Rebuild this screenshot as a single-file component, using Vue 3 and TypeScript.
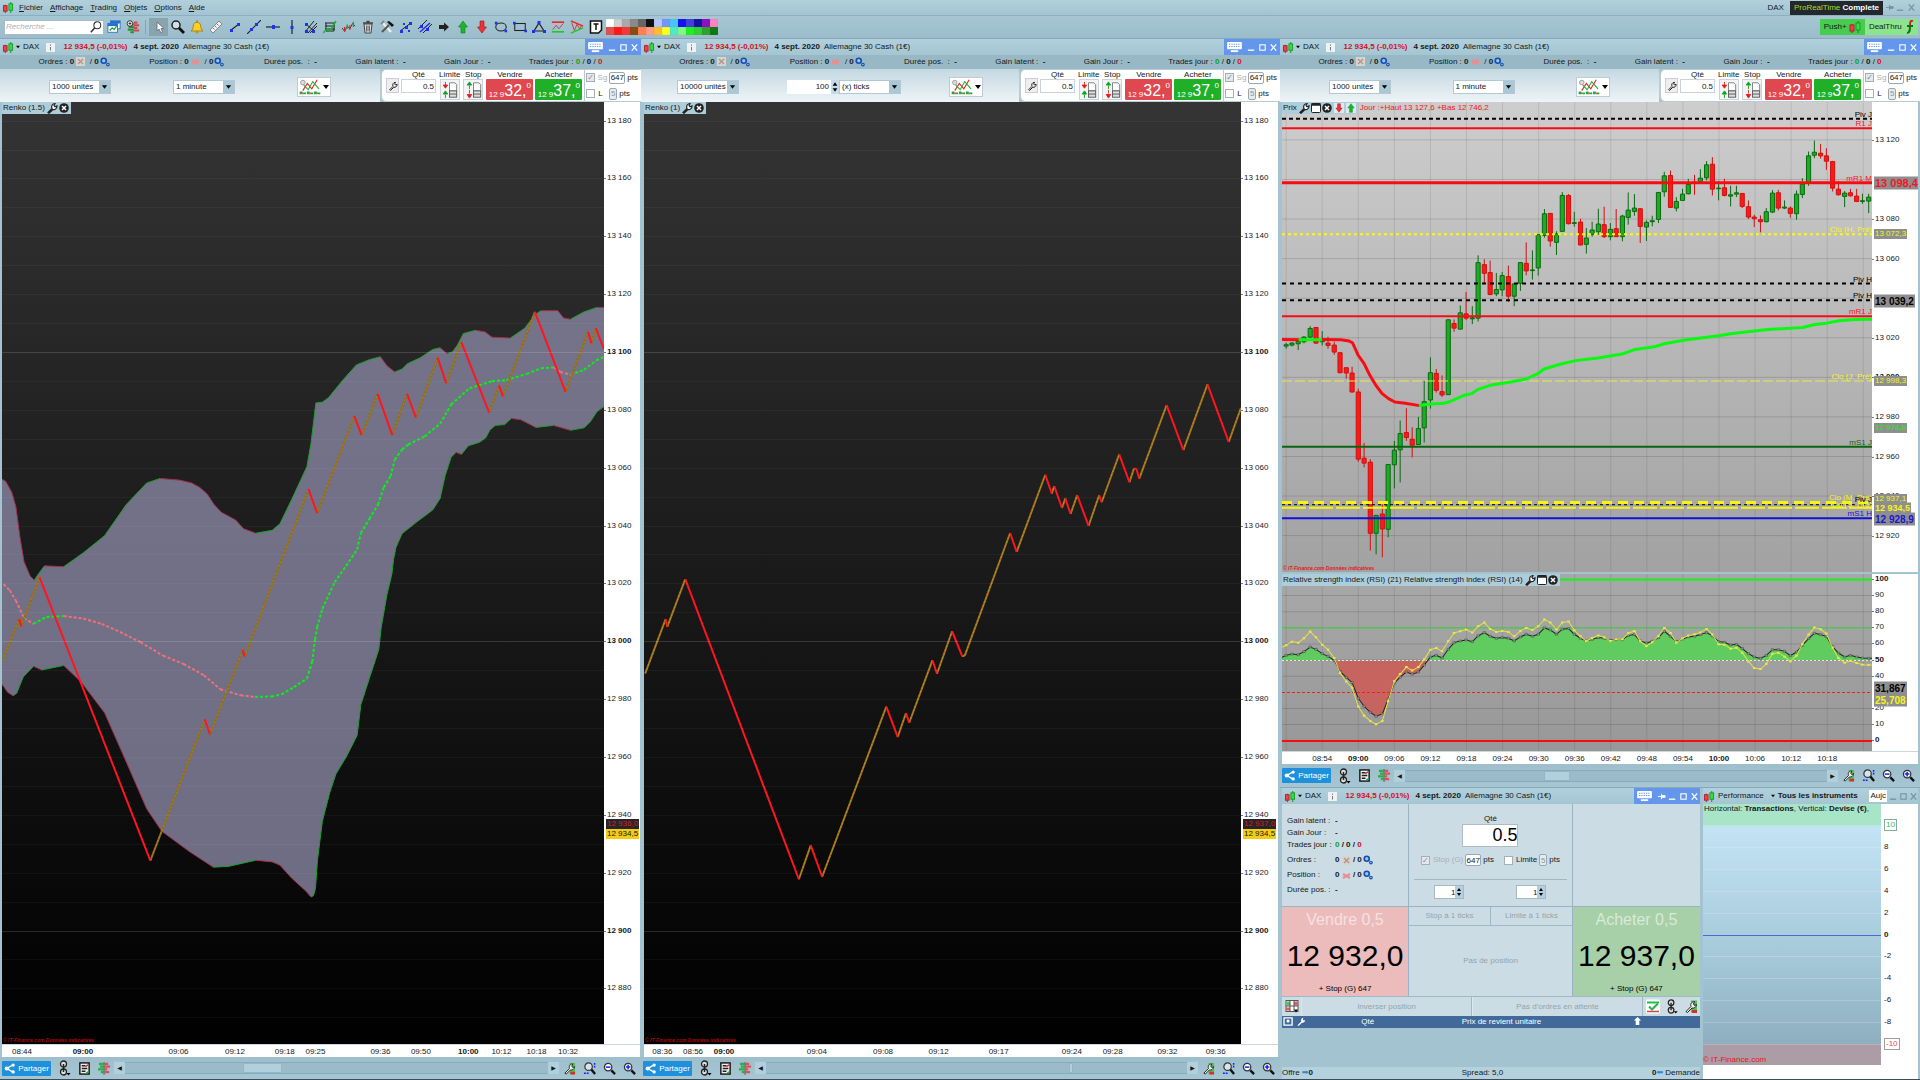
<script setup lang="ts">
type Point = [number, number]
interface Tick { at: number; text: string; bold?: boolean }
interface ChartWin {
  id: string
  units: string
  ticks: boolean
  head: string
  thumbAt: number
  thumbWidth: number
  times: Tick[]
}

const menus = ['Fichier', 'Affichage', 'Trading', 'Objets', 'Options', 'Aide']
const tools = ['cursor', 'zoom', 'bell', 'ruler', 'segment', 'line', 'hline', 'vline', 'fork', 'fibo', 'zigzag', 'trash', 'hammer', 'regress', 'parallel', 'right', 'up', 'down', 'ellipse', 'rect', 'triangle', 'range', 'wedge', 'text']
const palette = [
  '#fff', '#cfcfcf', '#aaa', '#8a8a8a', '#666', '#111', '#b4c8ff', '#6c98ff', '#48c4ff', '#1212f4', '#4040dc', '#1212a4', '#8a10c0', '#ff80c4',
  '#e05050', '#ff1818', '#f43838', '#8a4a10', '#ff8050', '#ff9c84', '#ffbc30', '#ffff20', '#50ecc0', '#80fa80', '#20f020', '#30d030', '#30a030', '#107810',
]

function ticksFrom(origin: number, span: number, pairs: [number, string][], bold: string[]): Tick[] {
  return pairs.map(([x, text]) => ({ at: ((x - origin) / span) * 100, text, bold: bold.includes(text) }))
}

const timesA = ticksFrom(6, 1473, [[55, '08:44'], [204, '09:00'], [438, '09:06'], [576, '09:12'], [698, '09:18'], [773, '09:25'], [932, '09:36'], [1031, '09:50'], [1147, '10:00'], [1228, '10:12'], [1314, '10:18'], [1391, '10:32']], ['09:00', '10:00'])
const timesB = ticksFrom(11, 1461, [[56, '08:36'], [131, '08:56'], [207, '09:00'], [434, '09:04'], [596, '09:08'], [732, '09:12'], [879, '09:17'], [1058, '09:24'], [1158, '09:28'], [1292, '09:32'], [1410, '09:36']], ['09:00'])
const namesC = ['08:54', '09:00', '09:06', '09:12', '09:18', '09:24', '09:30', '09:36', '09:42', '09:48', '09:54', '10:00', '10:06', '10:12', '10:18']
const timesC = ticksFrom(28, 1423, namesC.map((n, i) => [125 + 87 * i, n] as [number, string]), ['09:00', '10:00'])

const windows: ChartWin[] = [
  { id: 'a', units: '1000 unités', ticks: false, head: 'Renko (1.5)', thumbAt: 28, thumbWidth: 9, times: timesA },
  { id: 'b', units: '10000 unités', ticks: true, head: 'Renko (1)', thumbAt: 72, thumbWidth: 1, times: timesB },
  { id: 'c', units: '1000 unités', ticks: false, head: 'Prix', thumbAt: 33, thumbWidth: 6, times: timesC },
]

const renkoAxis: Tick[] = Array.from({ length: 16 }, (_, i) => {
  const price = 13180 - i * 20
  return { at: ((18.6 + i * 57.82) / 941.5) * 100, text: `${Math.floor(price / 1000)} ${String(price % 1000).padStart(3, '0')}`, bold: price % 100 === 0 }
})
const minorGrid = Array.from({ length: 33 }, (_, i) => ((18.6 + (i - 1) * 28.91) / 941.5) * 100)

function pts(s: string): Point[] {
  return s.split(' ').map(p => p.split(',').map(Number) as Point)
}
function slopes(list: Point[], rising: boolean): string {
  let d = ''
  for (let i = 1; i < list.length; i++) {
    if ((list[i][1] < list[i - 1][1]) === rising) d += `M${list[i - 1]}L${list[i]}`
  }
  return d
}

const upper = pts('6,488 15,493 30,520 40,555 50,630 60,690 75,725 85,735 95,720 110,700 157,702 205,668 257,626 310,550 360,497 393,486 440,490 470,497 490,508 508,524 525,550 543,569 578,588 597,609 627,620 667,613 686,597 715,537 752,457 762,400 774,301 790,299 805,288 840,245 873,208 905,195 932,188 948,210 967,225 985,218 998,205 1030,190 1060,170 1078,166 1095,180 1108,176 1120,160 1135,131 1165,123 1188,127 1205,140 1250,142 1285,118 1310,85 1325,75 1366,75 1380,93 1397,96 1430,78 1462,67 1479,67')
const lower = pts('6,990 20,1010 33,1018 42,1012 58,972 83,946 103,955 157,944 200,985 257,1060 310,1180 360,1295 397,1350 465,1400 523,1438 560,1436 627,1421 667,1425 686,1433 715,1465 750,1497 762,1511 768,1508 773,1490 778,1420 790,1325 808,1255 823,1210 850,1165 875,1115 884,1040 905,975 928,905 934,850 948,770 960,720 964,685 970,655 985,621 1020,593 1060,563 1078,535 1090,480 1105,434 1117,422 1130,427 1147,406 1175,397 1190,386 1200,367 1213,356 1236,354 1252,339 1275,342 1312,361 1355,356 1397,368 1430,362 1445,348 1462,322 1479,310')
const middle = pts('10,745 25,760 40,785 60,828 83,842 115,825 157,823 205,829 250,842 295,862 345,887 400,920 450,940 500,968 540,1002 590,1017 625,1021 665,1020 690,1015 720,997 752,976 765,935 772,880 777,850 790,805 820,740 848,700 875,660 884,620 905,585 926,550 940,508 957,480 967,440 985,415 1000,403 1040,383 1078,352 1105,305 1150,265 1205,248 1240,245 1290,230 1325,216 1357,214 1372,225 1397,232 1430,220 1460,197 1479,188')
const renkoA = pts('8,932 48,830 53,848 98,728 369,1422 502,1076 515,1113 595,906 600,922 756,512 777,571 868,333 886,380 925,279 961,380 997,279 1019,337 1072,190 1093,253 1130,152 1198,325 1222,258 1232,285 1310,78 1385,274 1440,127 1448,155 1459,118 1479,170')
const renkoB = pts('14,933 64,781 68,803 112,669 390,1509 419,1414 447,1502 604,1026 632,1111 652,1044 660,1071 717,896 728,934 765,815 790,885 796,883 907,540 923,593 993,377 1009,430 1015,409 1034,470 1042,443 1055,487 1071,434 1099,520 1125,434 1131,454 1174,320 1199,398 1210,360 1216,360 1223,388 1290,182 1331,308 1390,124 1442,285 1472,190')
const band = [...upper, ...[...lower].reverse()].join(' ')

// high, body top, body bottom, low; 1 marks a rising candle
const candleRows = '730,736,740,748,1 728,731,737,741,1 720,726,733,752,1 710,713,727,732,1 680,687,713,716,1 683,684,731,733,0 695,722,727,738,1 712,731,738,748,0 727,737,758,766,0 758,760,820,822,0 805,805,821,838,0 802,821,878,880,0 868,878,1080,1088,0 1031,1077,1092,1105,0 1080,1089,1303,1355,0 1248,1249,1303,1366,1 1216,1245,1290,1375,0 1095,1096,1291,1315,1 1025,1053,1097,1168,1 964,1003,1052,1150,1 927,1000,1015,1025,0 984,1020,1038,1075,0 953,988,1036,1037,1 845,907,986,1030,1 774,820,902,928,1 809,822,873,880,0 828,877,887,893,0 660,661,886,887,1 660,672,686,697,0 618,640,689,690,1 577,643,656,662,0 620,655,658,674,1 467,489,656,666,1 479,495,521,553,0 483,519,585,587,0 520,570,583,590,1 517,528,571,590,1 498,531,590,607,0 553,553,590,620,1 487,489,551,574,1 428,491,514,527,0 452,511,513,540,1 403,405,505,528,1 328,342,407,414,1 340,341,424,441,0 395,403,428,466,1 277,287,395,396,1 283,287,372,374,0 336,369,371,381,1 357,367,436,437,0 385,415,434,462,1 366,391,404,411,1 327,373,396,405,1 321,375,411,415,0 370,389,411,422,1 328,387,411,412,0 345,349,411,425,1 278,331,353,375,1 283,325,335,348,1 325,327,380,430,0 362,368,382,424,1 348,363,366,380,1 277,278,359,370,1 216,228,276,291,1 212,227,323,325,0 292,305,325,335,1 267,283,302,302,1 237,254,282,284,1 225,247,249,285,0 208,235,246,249,1 184,195,234,242,1 172,193,268,287,0 243,265,267,302,1 237,264,287,290,0 258,285,289,320,1 258,279,283,292,1 280,281,320,325,0 302,321,352,358,0 345,352,357,382,0 347,360,366,398,0 325,336,366,368,1 271,280,337,340,1 270,279,325,332,0 302,322,325,328,1 320,325,341,354,0 272,283,342,360,1 235,253,284,295,1 155,168,250,258,1 122,157,166,175,1 132,160,168,176,0 145,168,184,210,0 183,185,265,275,0 243,268,285,287,0 274,280,290,322,1 267,279,288,291,0 267,289,305,307,0 282,303,305,312,1 282,292,304,340,1'
const slotX = (i: number) => Math.round(38 + i * 14.48)
const candles = candleRows.split(' ').map((row, i) => {
  const [hi, top, bot, lo, up] = row.split(',').map(Number)
  return { x: slotX(i), hi, top, bot, lo, up: up === 1 }
})

const rsiSlow = [285, 281, 283, 274, 260, 267, 280, 288, 300, 333, 351, 366, 413, 437, 455, 467, 460, 416, 368, 350, 335, 341, 335, 314, 290, 285, 293, 267, 247, 242, 239, 244, 227, 217, 228, 234, 232, 234, 242, 230, 222, 228, 222, 203, 209, 222, 207, 205, 222, 234, 242, 237, 232, 234, 240, 238, 238, 226, 223, 242, 248, 243, 232, 213, 228, 244, 236, 230, 228, 223, 217, 227, 244, 246, 254, 252, 264, 280, 290, 294, 285, 268, 268, 273, 286, 275, 255, 235, 219, 223, 229, 259, 278, 290, 285, 290, 293, 294]
const rsiFast = [255, 244, 247, 234, 214, 231, 253, 268, 293, 338, 363, 382, 438, 465, 481, 491, 481, 422, 362, 341, 320, 330, 320, 297, 268, 263, 273, 243, 218, 213, 208, 217, 198, 187, 206, 215, 212, 215, 228, 212, 203, 209, 198, 178, 187, 208, 187, 184, 210, 228, 243, 233, 226, 231, 242, 237, 237, 219, 212, 243, 257, 246, 227, 203, 218, 247, 234, 226, 222, 217, 206, 223, 252, 253, 265, 262, 277, 303, 323, 326, 311, 280, 277, 289, 303, 286, 251, 223, 202, 207, 220, 262, 293, 307, 301, 308, 313, 314]
const asLine = (ys: number[]) => [`28,${ys[0] + 6}`, ...ys.map((y, i) => `${slotX(i)},${y}`), `1451,${ys[ys.length - 1]}`].join(' ')
const slowLine = asLine(rsiSlow)
const fastLine = asLine(rsiFast)
const squares = (ys: number[]) => ys.map((y, i) => `M${slotX(i) - 3},${y - 3}h6v6h-6z`).join('')

const gridX = Array.from({ length: 17 }, (_, i) => 38 + 87 * i)
const gridY = Array.from({ length: 11 }, (_, i) => 120 + 119 * i)
const py = (y: number) => ((y - 6) / 1412) * 100
const ry = (y: number) => ((y - 42) / 530) * 100
const levels = [
  { y: 56, c: 'black', t: 'Piv J' }, { y: 85, c: 'red', t: 'R1 J' }, { y: 249, c: 'red', t: 'mR1 M' }, { y: 403, c: 'yellow', t: 'Clo (H. Pré)' },
  { y: 552, c: 'black', t: 'Piv H' }, { y: 601, c: 'black', t: 'Piv H' }, { y: 650, c: 'red', t: 'mR1 J' }, { y: 845, c: 'yellow', t: 'Clo (J. Pré)' },
  { y: 1043, c: 'green', t: 'mS1 J' }, { y: 1210, c: 'yellow', t: 'Clo (M. Pré)' }, { y: 1216, c: 'black', t: 'Piv J' }, { y: 1230, c: 'yellow', t: 'Clo (S. Pré)' }, { y: 1258, c: 'blue', t: 'mS1 H' },
]
const priceAxis: [number, string][] = [[120, '13 120'], [358, '13 080'], [477, '13 060'], [715, '13 020'], [832, '13 000'], [954, '12 980'], [1073, '12 960'], [1192, '12 940'], [1311, '12 920']]
const priceTags = [
  { y: 250, t: '13 098,4', k: 'red xl' }, { y: 404, t: '13 072,3', k: 'yellow' }, { y: 603, t: '13 039,2', k: 'black lg' }, { y: 846, t: '12 998,3', k: 'yellow' },
  { y: 985, t: '12 974,8', k: 'lime' }, { y: 1199, t: '12 937,1', k: 'yellow' }, { y: 1226, t: '12 934,5', k: 'yellow md' }, { y: 1260, t: '12 928,9', k: 'blue lg' },
]
const rsiAxis = [100, 90, 80, 70, 60, 50, 40, 20, 10, 0].map(v => ({ v, at: ry(58 + (100 - v) * 4.82) }))
const perfAxis = [10, 8, 6, 4, 2, 0, -2, -4, -6, -8, -10].map((v, i) => ({ v, at: 8.2 + i * 8.37 }))
</script>

<template>
  <svg class="defs" aria-hidden="true">
    <defs>
      <symbol id="i-candle" viewBox="0 0 12 12"><path d="M3 3v9" stroke="#a01820" /><path d="M9 0v12" stroke="#108820" /><rect x="1" y="4" width="4" height="6" fill="#f0404c" stroke="#b02028" /><rect x="7" y="2" width="4" height="7" fill="#30e040" stroke="#189828" /></symbol>
      <symbol id="i-wrench" viewBox="0 0 12 12"><path d="M2 10.500L6 6.500C5 4 6.500 1.500 9 1.500L8 3.500 9 4.800 11 4C11 6.500 9 8 7 7.500L3 11.300Z" fill="#fff" stroke="#222" stroke-width="1.200" /></symbol>
      <symbol id="i-close" viewBox="0 0 10 10"><circle cx="5" cy="5" r="4.800" fill="#222" /><path d="M3 3l4 4M7 3l-4 4" stroke="#fff" stroke-width="1.500" /></symbol>
      <symbol id="i-doc" viewBox="0 0 10 10"><rect x=".5" y=".5" width="9" height="9" rx="1" fill="#fff" stroke="#222" /><path d="M.5 1.500h9" stroke="#222" stroke-width="2.500" /></symbol>
      <symbol id="i-kbd" viewBox="0 0 16 13"><rect y="1" width="16" height="8" rx="1" fill="#fff" /><path d="M2 3.500h12M2 6h12" stroke="#5c92f0" stroke-dasharray="1.500 1" /><path d="M4 11h8" stroke="#fff" stroke-width="2" /></symbol>
      <symbol id="i-gears" viewBox="0 0 12 12"><circle cx="4.500" cy="4.500" r="3" fill="#9cc4f0" stroke="#1450b0" stroke-width="2" /><circle cx="9.500" cy="9" r="1.600" fill="#9cc4f0" stroke="#1450b0" stroke-width="1.300" /></symbol>
      <symbol id="i-x" viewBox="0 0 9 9"><rect width="9" height="9" fill="#d8d4d0" /><path d="M2 2l5 5M7 2l-5 5" stroke="#b8988c" stroke-width="1.600" /></symbol>
      <symbol id="i-x2" viewBox="0 0 9 9"><path d="M1 3l7 4M8 3l-7 4" stroke="#ec8c90" stroke-width="2.200" /></symbol>
      <symbol id="i-info" viewBox="0 0 9 9"><rect width="9" height="9" fill="#eef2f4" /><path d="M4.500 4v3.500M4.500 1.500v1.300" stroke="#777" /></symbol>
      <symbol id="i-indic" viewBox="0 0 24 20"><rect width="24" height="20" fill="#fff" /><path d="M4 14L9 6 14 12 20 2" fill="none" stroke="#e02030" stroke-width="1.200" /><path d="M5 8L10 13 15 4 22 12" fill="none" stroke="#20b030" stroke-width="1.200" /><path d="M2 18v-3M6 18v-2M10 18v-3M14 18v-2M18 18v-3M22 18v-2" stroke="#20a838" stroke-width="3" /><path d="M4 18v-2M12 18v-2M20 18v-2" stroke="#e02030" /><circle cx="4" cy="5" r="2.500" fill="#ddd" stroke="#999" /></symbol>
      <symbol id="i-limit" viewBox="0 0 18 20"><path d="M9 2h6l2 2v7H9z" fill="#fff" stroke="#777" /><rect x="9" y="11" width="8" height="7" fill="#ddd" stroke="#555" /><path d="M9 14.500h8" stroke="#555" /><path d="M4.500 1v4M2 4.500h5L4.500 8z" stroke="#e02020" fill="#e02020" /><path d="M4.500 19v-4M2 14.500h5L4.500 11z" stroke="#10a020" fill="#10a020" /></symbol>
      <symbol id="i-stop" viewBox="0 0 18 20"><path d="M9 2h6l2 2v7H9z" fill="#fff" stroke="#777" /><rect x="9" y="11" width="8" height="7" fill="#ddd" stroke="#555" /><path d="M9 14.500h8" stroke="#555" /><path d="M4.500 9v-4M2 4.500h5L4.500 1z" stroke="#10a020" fill="#10a020" /><path d="M4.500 10v4M2 15h5L4.500 19z" stroke="#e02020" fill="#e02020" /></symbol>
      <symbol id="i-share" viewBox="0 0 12 12"><path d="M10 2L3 6l7 4" fill="none" stroke="#fff" stroke-width="1.500" /><circle cx="3" cy="6" r="2.300" fill="#fff" /><circle cx="10" cy="2.300" r="1.800" fill="#fff" /><circle cx="10" cy="9.700" r="1.800" fill="#fff" /></symbol>
      <symbol id="i-link" viewBox="0 0 12 16"><circle cx="5" cy="4" r="3" fill="#ddd" stroke="#222" stroke-width="1.300" /><circle cx="5" cy="12" r="3" fill="#ddd" stroke="#222" stroke-width="1.300" /><path d="M5 4v8" stroke="#222" stroke-width="1.500" /><path d="M8 13h4l-2 2.500z" /></symbol>
      <symbol id="i-list" viewBox="0 0 12 14"><rect x="1" y="1" width="10" height="12" fill="#eee" stroke="#111" stroke-width="1.500" /><path d="M3 4h4M3 7h6M3 10h4" stroke="#222" stroke-width="1.500" /><path d="M7 5l3-2" stroke="#e02020" stroke-width="1.500" /><path d="M8 12l3-2" stroke="#20a030" stroke-width="1.500" /></symbol>
      <symbol id="i-book" viewBox="0 0 14 14"><path d="M1 2h5M2 5h4M0 8h6M3 11h3" stroke="#28b040" stroke-width="2.400" /><path d="M7 2h4M7 5h6M7 8h3M7 11h5" stroke="#e05058" stroke-width="2.400" /><path d="M6.500 0v14" stroke="#555" /></symbol>
      <symbol id="i-tool" viewBox="0 0 14 14"><rect x="7" y="1" width="6" height="12" fill="#50c050" /><path d="M8 12h5" stroke="#d03030" stroke-width="3" /><path d="M2 12L7 7C6 4 8 2 10.500 2L9.500 4.500 10.500 6 12.500 5C12 8 10 9 8 8.500L3.500 13Z" fill="#eee" stroke="#222" /></symbol>
      <symbol id="i-fit" viewBox="0 0 14 14"><circle cx="6" cy="5" r="4" fill="#d8e4ea" stroke="#333" stroke-width="1.300" /><path d="M9 8l4 5" stroke="#111" stroke-width="2.500" /><path d="M12.500 1v6M1 12h6" stroke="#1020ff" stroke-width="1.600" stroke-dasharray="2 1" /></symbol>
      <symbol id="i-out" viewBox="0 0 14 14"><circle cx="5.500" cy="5.500" r="4" fill="#fff" stroke="#333" stroke-width="1.300" /><path d="M9 9l4 4" stroke="#111" stroke-width="2.500" /><path d="M3 5.500h5" stroke="#1020ff" stroke-width="1.600" /></symbol>
      <symbol id="i-in" viewBox="0 0 14 14"><circle cx="5.500" cy="5.500" r="4" fill="#fff" stroke="#333" stroke-width="1.300" /><path d="M9 9l4 4" stroke="#111" stroke-width="2.500" /><path d="M3 5.500h5M5.500 3v5" stroke="#1020ff" stroke-width="1.600" /></symbol>
      <symbol id="i-search" viewBox="0 0 14 14"><circle cx="8.500" cy="5" r="4" fill="#fff" stroke="#333" stroke-width="1.200" /><path d="M5.500 8L1 13" stroke="#333" stroke-width="1.800" /></symbol>
      <symbol id="i-screens" viewBox="0 0 16 16"><rect x="4" y="1" width="11" height="9" fill="#fff" stroke="#2070d0" /><path d="M4 2.500h11" stroke="#2070d0" stroke-width="3" /><rect x="1" y="4" width="11" height="10" fill="#fff" stroke="#2070d0" /><path d="M1 5.500h11" stroke="#2070d0" stroke-width="3" /><path d="M3 12l3-3 2 2 3-4" fill="none" stroke="#20a030" stroke-width="1.500" /></symbol>
      <symbol id="i-plusbook" viewBox="0 0 16 16"><path d="M4 5h5M3 8h6M2 11h7M5 14h4" stroke="#28903a" stroke-width="2.500" /><path d="M9 3h4M9 6h6M9 9h4M9 12h6" stroke="#d04850" stroke-width="2.500" /><circle cx="4.500" cy="4" r="3.200" fill="#eee" stroke="#222" /><path d="M4.500 2.500v3M3 4h3" stroke="#222" /></symbol>
      <symbol id="i-cursor" viewBox="0 0 14 14"><path d="M5 2v9l2-2 2 4 1.500-1L9 8.500h3z" fill="#fff" stroke="#667" stroke-width=".8" /></symbol>
      <symbol id="i-zoom" viewBox="0 0 14 14"><circle cx="5" cy="5" r="4" fill="#cfe0e8" stroke="#222" stroke-width="1.500" /><path d="M8 8l5 5" stroke="#111" stroke-width="2.800" /></symbol>
      <symbol id="i-bell" viewBox="0 0 14 14"><path d="M1 11c2-1 2-3 2.500-6C4 1.500 10 1.500 10.500 5c.5 3 .5 5 2.500 6z" fill="#ffd020" stroke="#a07808" stroke-width=".8" /><circle cx="7" cy="12" r="1.500" fill="#c89010" /><path d="M7 0v2" stroke="#a07808" /></symbol>
      <symbol id="i-ruler" viewBox="0 0 14 14"><path d="M1 10L10 1l3 3-9 9z" fill="#f0f0f0" stroke="#888" /><path d="M4 8l1.500 1.500M6 6l1.500 1.500M8 4l1.500 1.500" stroke="#777" /></symbol>
      <symbol id="i-segment" viewBox="0 0 14 14"><path d="M3 10l8-6" stroke="#222" stroke-width="1.200" /><path d="M2 9h3v3H2zM9 3h3v3H9z" fill="#2030f0" /></symbol>
      <symbol id="i-line" viewBox="0 0 14 14"><path d="M0 14L14 0" stroke="#222" stroke-width="1.200" /><path d="M3 8h3v3H3zM8 3h3v3H8z" fill="#2030f0" /></symbol>
      <symbol id="i-hline" viewBox="0 0 14 14"><path d="M0 7h14" stroke="#222" stroke-width="1.200" /><path d="M6 5h3v4H6z" fill="#2030f0" /></symbol>
      <symbol id="i-vline" viewBox="0 0 14 14"><path d="M7 0v14" stroke="#222" stroke-width="1.200" /><path d="M5.500 6h3v3h-3z" fill="#2030f0" /></symbol>
      <symbol id="i-fork" viewBox="0 0 14 14"><path d="M1 12L10 1M4 13L13 3M6 13l7-7M2 4l8 7" stroke="#222" fill="none" /><path d="M1 3h3v3H1zM1 10h3v3H1zM8 10h3v3H8z" fill="#2030f0" /></symbol>
      <symbol id="i-fibo" viewBox="0 0 14 14"><path d="M2 3h10M2 6h10M2 9h10M3 3v8h8V3" stroke="#222" fill="none" /><path d="M0 13l4-4 3 2 6-10" stroke="#20b030" fill="none" stroke-width="1.500" /></symbol>
      <symbol id="i-zigzag" viewBox="0 0 16 14"><path d="M0 8l3 4 3-6 3 3 3-6 3 3" stroke="#333" fill="none" /><path d="M3 7v5M9 5v5" stroke="#e02020" stroke-width="1.500" /><path d="M6 4v5M13 1v6" stroke="#20a030" stroke-width="1.500" /></symbol>
      <symbol id="i-trash" viewBox="0 0 14 14"><path d="M3 4h8l-1 9H4z" fill="#ddd" stroke="#444" /><path d="M2 3h10M5.500 1.500h3" stroke="#444" stroke-width="1.500" /><path d="M5.500 5.500v6M7 5.500v6M8.500 5.500v6" stroke="#666" /></symbol>
      <symbol id="i-hammer" viewBox="0 0 14 14"><path d="M2 2l9 10" stroke="#eee" stroke-width="2.500" /><path d="M2 12L9 5" stroke="#555" stroke-width="2" /><path d="M7 2l5 5 2-2-5-4z" fill="#111" /><path d="M1 4l3-3" stroke="#888" stroke-width="2" /></symbol>
      <symbol id="i-regress" viewBox="0 0 14 14"><path d="M1 11L12 3" stroke="#222" /><path d="M1 10h3v3H1zM6 6h3v3H6zM10 2h3v3h-3zM4 3h2v2H4zM9 10h2v2H9z" fill="#2030f0" /></symbol>
      <symbol id="i-parallel" viewBox="0 0 14 14"><path d="M0 9L9 0M5 13l9-9" stroke="#222" /><path d="M2 12L12 3" stroke="#2030f0" stroke-width="1.500" /><path d="M2 5h3v3H2zM8 8h3v3H8z" fill="#2030f0" /></symbol>
      <symbol id="i-right" viewBox="0 0 14 14"><path d="M2 5h5V2.500L12 7l-5 4.500V9H2z" fill="#222" /></symbol>
      <symbol id="i-up" viewBox="0 0 14 14"><path d="M5 13V7H2.500L7 1l4.500 6H9v6z" fill="#18b828" stroke="#108018" stroke-width=".6" /></symbol>
      <symbol id="i-down" viewBox="0 0 14 14"><path d="M5 1v6H2.500L7 13l4.500-6H9V1z" fill="#f03038" stroke="#a01018" stroke-width=".6" /></symbol>
      <symbol id="i-ellipse" viewBox="0 0 16 14"><ellipse cx="8" cy="7" rx="6" ry="4.500" fill="none" stroke="#222" stroke-width="1.200" /><path d="M1 1h3v3H1zM12 10h3v3h-3z" fill="#2030f0" /></symbol>
      <symbol id="i-rect" viewBox="0 0 16 14"><rect x="2" y="3" width="12" height="8" fill="none" stroke="#222" stroke-width="1.200" /><path d="M0 1h3v3H0zM13 10h3v3h-3z" fill="#2030f0" /></symbol>
      <symbol id="i-triangle" viewBox="0 0 14 14"><path d="M7 3l5 8H2z" fill="none" stroke="#222" stroke-width="1.200" /><path d="M5.500 1h3v3h-3zM0 10h3v3H0zM11 10h3v3h-3z" fill="#2030f0" /></symbol>
      <symbol id="i-range" viewBox="0 0 16 14"><path d="M1 1.500h14" stroke="#f02028" stroke-width="1.800" /><path d="M1 12.500h14" stroke="#10d020" stroke-width="1.800" /><path d="M2 10l4-5 3 4 5-6" fill="none" stroke="#d03030" /></symbol>
      <symbol id="i-wedge" viewBox="0 0 16 14"><path d="M1 0l14 6" stroke="#f02028" stroke-width="1.800" /><path d="M1 14l14-6" stroke="#10d020" stroke-width="1.800" /><path d="M2 2l3 9 3-7 3 5 2-3" fill="none" stroke="#d03030" /></symbol>
      <symbol id="i-text" viewBox="0 0 14 14"><path d="M1.500 1h11v9l-3 3h-8z" fill="#fff" stroke="#111" stroke-width="1.500" /><path d="M4.500 4h5M7 4v6" stroke="#111" stroke-width="1.500" /></symbol>
      <symbol id="i-min" viewBox="0 0 10 10"><path d="M1 8h7" stroke="currentColor" stroke-width="1.500" /></symbol>
      <symbol id="i-max" viewBox="0 0 10 10"><rect x="2" y="2" width="6" height="6" fill="none" stroke="currentColor" stroke-width="1.200" /></symbol>
      <symbol id="i-quit" viewBox="0 0 10 10"><path d="M2 1.500l6 7M8 1.500l-6 7" stroke="currentColor" stroke-width="1.400" /></symbol>
      <symbol id="i-pin" viewBox="0 0 10 10"><path d="M1 5h4M5 2v6M5 4h4v2H5z" stroke="currentColor" fill="currentColor" /></symbol>
      <symbol id="i-caret" viewBox="0 0 8 6"><path d="M1 1h6L4 5z" /></symbol>
      <symbol id="i-orders" viewBox="0 0 14 14"><rect x="1" y="1" width="12" height="11" fill="#fff" stroke="#555" /><path d="M1 2h4v4H1z" fill="#60c060" /><path d="M9 2h4v4H9zM1 8h4v3H1z" fill="#e06060" /><path d="M5 1v11M9 1v11M1 6.500h12" stroke="#555" /><path d="M9 10h4l-2 3z" /></symbol>
      <symbol id="i-check" viewBox="0 0 14 14"><rect width="14" height="14" rx="1" fill="#fff" /><path d="M1 3h12" stroke="#20c040" stroke-width="2" /><path d="M1 12h12" stroke="#e04040" stroke-width="1.500" /><path d="M3 7l3 3 6-6" fill="none" stroke="#30b050" stroke-width="2" /></symbol>
    </defs>
  </svg>

  <div class="app">
    <header class="menubar">
      <svg class="logo"><use href="#i-candle" /></svg>
      <nav>
        <a v-for="m in menus" :key="m" href="#"><u>{{ m[0] }}</u>{{ m.slice(1) }}</a>
      </nav>
      <span class="push">DAX</span>
      <span class="brand"><i>ProRealTime</i> Complete</span>
      <span class="winbtns dim"><svg><use href="#i-pin" /></svg><svg><use href="#i-min" /></svg><svg><use href="#i-quit" /></svg></span>
    </header>

    <div class="toolbar">
      <div class="search">
        <input type="text" placeholder="Recherche ..." aria-label="Recherche">
        <svg><use href="#i-search" /></svg>
      </div>
      <button class="tool" aria-label="screens"><svg><use href="#i-screens" /></svg></button>
      <button class="tool" aria-label="plusbook"><svg><use href="#i-plusbook" /></svg></button>
      <span class="sep"></span>
      <button v-for="t in tools" :key="t" class="tool" :class="{ on: t === 'cursor' }" :aria-label="t"><svg><use :href="`#i-${t}`" /></svg></button>
      <div class="palette">
        <button v-for="c in palette" :key="c" :style="{ background: c }" :aria-label="c"></button>
      </div>
      <button class="thru first">Push+ <svg><use href="#i-candle" /></svg></button>
      <button class="thru">DealThru <svg viewBox="0 0 8 14"><path d="M7 1C4 0 4 3 4 6" fill="none" stroke="#d02020" stroke-width="2" /><path d="M4 6C4 10 4 13 1 13M1 6h6" fill="none" stroke="#107020" stroke-width="2" /></svg></button>
    </div>

    <main class="desk">
      <div v-for="w in windows" :key="w.id" class="column" :class="w.id">
        <section class="win">
          <header class="title">
            <svg class="logo"><use href="#i-candle" /></svg><svg class="caret"><use href="#i-caret" /></svg>
            <span>DAX</span><svg class="info"><use href="#i-info" /></svg>
            <b class="neg">12 934,5 (-0,01%)</b><b>4 sept. 2020</b><span>Allemagne 30 Cash (1€)</span>
            <span class="winbtns"><svg class="kbd"><use href="#i-kbd" /></svg><svg><use href="#i-min" /></svg><svg><use href="#i-max" /></svg><svg><use href="#i-quit" /></svg></span>
          </header>
          <div class="infos">
            <span>Ordres : <b>0</b> <svg class="s9"><use href="#i-x" /></svg> &nbsp;/ <b>0</b><svg class="s12"><use href="#i-gears" /></svg></span>
            <span>Position : <b>0</b> <svg class="s9"><use href="#i-x2" /></svg> &nbsp;/ <b>0</b><svg class="s12"><use href="#i-gears" /></svg></span>
            <span>Durée pos. &nbsp;: &nbsp;<b>-</b></span>
            <span>Gain latent : &nbsp;<b>-</b></span>
            <span>Gain Jour : &nbsp;<b>-</b></span>
            <span>Trades jour : <b class="pos">0</b> / <b>0</b> / <b class="neg">0</b></span>
          </div>
          <div class="settings">
            <div class="choices">
              <label class="sel"><select aria-label="Unités"><option>{{ w.units }}</option></select><svg><use href="#i-caret" /></svg></label>
              <div v-if="w.ticks" class="pair">
                <input class="num" type="text" value="100" aria-label="Nombre">
                <svg class="spin" viewBox="0 0 6 12"><path d="M1 5l2-3 2 3zM1 7l2 3 2-3z" /></svg>
                <label class="sel"><select aria-label="Type"><option>(x) ticks</option></select><svg><use href="#i-caret" /></svg></label>
              </div>
              <label v-else class="sel"><select aria-label="Période"><option>1 minute</option></select><svg><use href="#i-caret" /></svg></label>
              <button class="indic" aria-label="Indicateurs"><svg><use href="#i-indic" /></svg><svg class="caret"><use href="#i-caret" /></svg></button>
            </div>
            <div class="trade">
              <button class="cfg" aria-label="Réglages"><svg><use href="#i-wrench" /></svg></button>
              <label class="col qty"><span>Qté</span><input type="text" value="0.5"></label>
              <div class="col"><span>Limite</span><button aria-label="Limite"><svg><use href="#i-limit" /></svg></button></div>
              <div class="col"><span>Stop</span><button aria-label="Stop"><svg><use href="#i-stop" /></svg></button></div>
              <div class="col"><span>Vendre</span><button class="px sell">12 9<big>32,</big><sup>0</sup></button></div>
              <div class="col"><span>Acheter</span><button class="px buy">12 9<big>37,</big><sup>0</sup></button></div>
              <div class="opts">
                <div><label class="off"><input type="checkbox" checked>Sg</label><input class="box" type="text" value="647" aria-label="Stop garanti">pts</div>
                <div><label><input type="checkbox">L</label><input class="box thin" type="text" value="5" aria-label="Limite points">pts</div>
              </div>
            </div>
          </div>

          <div class="chart">
            <div v-if="w.id !== 'c'" class="plot renko">
              <svg v-if="w.id === 'a'" viewBox="6 -436 1473 2307" preserveAspectRatio="none">
                <polygon :points="band" fill="#8684a0" opacity=".82" />
                <path :d="slopes(upper, true) + slopes(lower, true)" class="ln" stroke="#18a028" />
                <path :d="slopes(upper, false) + slopes(lower, false)" class="ln" stroke="#a03048" />
                <path :d="slopes(middle, true)" class="ln dots" stroke="#08f018" />
                <path :d="slopes(middle, false)" class="ln dots" stroke="#f07078" />
                <path :d="slopes(renkoA, true)" class="ln mid" stroke="#a86020" />
                <path :d="slopes(renkoA, true)" class="ln grain" stroke="#58b010" />
                <path :d="slopes(renkoA, false)" class="ln mid" stroke="#ff1420" />
              </svg>
              <svg v-else viewBox="11 -666 1461 2636" preserveAspectRatio="none">
                <path :d="slopes(renkoB, true)" class="ln" stroke="#b4641c" stroke-width="2" />
                <path :d="slopes(renkoB, true)" class="ln grain" stroke="#70b818" />
                <path :d="slopes(renkoB, false)" class="ln mid" stroke="#ff1420" />
              </svg>
              <i v-for="g in minorGrid" :key="g" class="hair" :style="{ top: g + '%' }"></i>
              <i v-for="t in renkoAxis.filter(x => x.bold)" :key="t.text" class="hair strong" :style="{ top: t.at + '%' }"></i>
              <small>© IT-Finance.com Données indicatives</small>
            </div>
            <div v-else class="plot price">
              <svg viewBox="28 6 1423 1412" preserveAspectRatio="none">
                <path v-for="x in gridX" :key="'v' + x" :d="`M${x} 6V1418`" class="ln" stroke="#00000018" />
                <path v-for="y in gridY" :key="'h' + y" :d="`M28 ${y}H1451`" class="ln" stroke="#00000022" />
                <g v-for="c in candles" :key="c.x" :fill="c.up ? '#1cac24' : '#fb1a1a'" :stroke="c.up ? '#0a6a10' : '#d01010'">
                  <path :d="`M${c.x} ${c.hi}V${c.lo}`" class="ln" />
                  <rect :x="c.x - 5" :y="c.top" width="10" :height="c.bot - c.top" class="body" />
                </g>
                <path class="ln" stroke-width="2" stroke-dasharray="4 3" stroke="#000" d="M28 56H1451" />
                <path class="ln" stroke-width="2" stroke-dasharray="4 4" stroke="#000" d="M28 552H1451M28 602H1451" />
                <path class="ln thick" stroke="#f80c14" d="M28 249H1451" />
                <path class="ln mid" stroke="#f80c14" d="M28 85H1451M28 650H1451" />
                <path class="ln mid" stroke-dasharray="3 3" stroke="#f8f820" d="M28 404H1451" />
                <path class="ln" stroke-dasharray="10 3" stroke="#e8e850" d="M28 845H1451" />
                <path class="ln mid" stroke="#0c6410" d="M28 1043H1451" />
                <path class="ln thick" stroke-dasharray="10 6" stroke="#f8f410" d="M28 1210H1451" />
                <path class="ln mid" stroke-dasharray="24 3" stroke="#f8f410" d="M28 1226H1451" />
                <path class="ln" stroke-width="1" stroke-dasharray="3 3" stroke="#000" d="M28 1217H1451" />
                <path class="ln mid" stroke="#1010d8" d="M28 1258H1451" />
                <path class="ln ma" stroke="#fb0c14" d="M28 720L70 721M124 720L170 721 190 725 198 730 211 766 226 793 240 828 254 857 269 882 285 898 300 908 325 912 360 919" />
                <path class="ln ma" stroke="#08fa10" d="M68 721H124M358 919L385 914 414 913 428 909 470 887 486 883 501 870 530 858 580 848 617 839 645 823 660 809 703 793 740 783 790 776 848 764 880 750 930 741 950 733 1000 722 1081 709 1110 703 1200 690 1284 684 1313 675 1342 671 1371 664 1410 660 1451 659" />
              </svg>
              <span v-for="l in levels" :key="l.y" class="level" :class="l.c" :style="{ top: py(l.y) + '%' }">{{ l.t }}</span>
              <small>© IT-Finance.com Données indicatives</small>
            </div>
            <div class="yaxis">
              <template v-if="w.id !== 'c'">
                <span v-for="t in renkoAxis" :key="t.text" class="lab" :class="{ bold: t.bold }" :style="{ top: t.at + '%' }">{{ t.text }}</span>
                <span class="lab tag dark" :style="{ top: '76.6%' }">{{ w.id === 'a' ? '12 936,0' : '12 937,0' }}</span>
                <span class="lab tag gold" :style="{ top: '77.7%' }">12 934,5</span>
              </template>
              <template v-else>
                <span v-for="t in priceAxis" :key="t[1]" class="lab" :class="{ bold: t[1] === '13 000' }" :style="{ top: py(t[0]) + '%' }">{{ t[1] }}</span>
                <span v-for="t in priceTags" :key="t.t" class="lab tag" :class="t.k" :style="{ top: py(t.y) + '%' }">{{ t.t }}</span>
              </template>
            </div>
            <div class="head">
              {{ w.head }}<svg class="s11"><use href="#i-wrench" /></svg><svg v-if="w.id === 'c'"><use href="#i-doc" /></svg><svg><use href="#i-close" /></svg>
              <template v-if="w.id === 'c'"><svg class="pale"><use href="#i-down" /></svg><svg class="pale"><use href="#i-up" /></svg><span class="day">Jour :+Haut 13 127,6 +Bas 12 746,2</span></template>
            </div>
          </div>

          <div v-if="w.id === 'c'" class="chart rsi">
            <div class="plot">
              <svg viewBox="28 42 1423 530" preserveAspectRatio="none">
                <clipPath id="over"><rect x="28" y="42" width="1423" height="258" /></clipPath>
                <clipPath id="under"><rect x="28" y="300" width="1423" height="272" /></clipPath>
                <path v-for="x in gridX" :key="'v' + x" :d="`M${x} 42V572`" class="ln" stroke="#00000018" />
                <path v-for="r in rsiAxis" :key="'h' + r.v" :d="`M28 ${58 + (100 - r.v) * 4.82}H1451`" class="ln" stroke="#00000022" />
                <polygon :points="`28,300 ${slowLine} 1451,300`" fill="#60cc60" clip-path="url(#over)" />
                <polygon :points="`28,300 ${slowLine} 1451,300`" fill="#c86460" clip-path="url(#under)" />
                <path class="ln" stroke-dasharray="2 2" stroke="#e8e8e8" d="M28 300H1451" />
                <path class="ln" stroke-dasharray="4 1" stroke="#20f020" d="M28 203H1451" />
                <path class="ln" stroke-dasharray="3 2" stroke="#f02020" d="M28 396H1451" />
                <path class="ln mid" stroke="#10f818" d="M28 59H1451" />
                <path class="ln mid" stroke="#f80c10" d="M28 541H1451" />
                <polyline class="ln" stroke="#222" :points="slowLine" /><path :d="squares(rsiSlow)" class="knots" />
                <polyline class="ln" stroke="#e0e040" :points="fastLine" /><path :d="squares(rsiFast)" fill="#e8e840" />
              </svg>
            </div>
            <div class="yaxis">
              <span v-for="r in rsiAxis" :key="r.v" class="lab" :class="{ bold: r.v % 50 === 0 }" :style="{ top: r.at + '%' }">{{ r.v }}</span>
              <span class="lab tag black lg" :style="{ top: ry(383) + '%' }">31,867</span>
              <span class="lab tag yellow lg" :style="{ top: ry(421) + '%' }">25,708</span>
            </div>
            <div class="head">Relative strength index (RSI) (21) Relative strength index (RSI) (14)<svg class="s11"><use href="#i-wrench" /></svg><svg><use href="#i-doc" /></svg><svg><use href="#i-close" /></svg></div>
          </div>

          <div class="xaxis"><div>
            <span v-for="t in w.times" :key="t.text" :class="{ bold: t.bold }" :style="{ left: t.at + '%' }">{{ t.text }}</span>
          </div></div>

          <footer class="foot">
            <button class="share"><svg><use href="#i-share" /></svg>Partager</button>
            <button aria-label="Lier"><svg class="tall"><use href="#i-link" /></svg></button>
            <button aria-label="Liste"><svg><use href="#i-list" /></svg></button>
            <button aria-label="Carnet"><svg><use href="#i-book" /></svg></button>
            <button class="arrow" aria-label="Gauche">◀</button>
            <div class="track"><i :style="{ left: w.thumbAt + '%', width: w.thumbWidth + '%' }"></i></div>
            <button class="arrow" aria-label="Droite">▶</button>
            <button aria-label="Outils"><svg><use href="#i-tool" /></svg></button>
            <button aria-label="Ajuster"><svg><use href="#i-fit" /></svg></button>
            <button aria-label="Réduire"><svg><use href="#i-out" /></svg></button>
            <button aria-label="Agrandir"><svg><use href="#i-in" /></svg></button>
          </footer>
        </section>

        <div v-if="w.id === 'c'" class="bottom">
          <section class="ticket">
            <header class="title">
              <svg class="logo"><use href="#i-candle" /></svg><svg class="caret"><use href="#i-caret" /></svg>
              <span>DAX</span><svg class="info"><use href="#i-info" /></svg>
              <b class="neg">12 934,5 (-0,01%)</b><b>4 sept. 2020</b><span>Allemagne 30 Cash (1€)</span>
              <span class="winbtns"><svg class="kbd"><use href="#i-kbd" /></svg><svg><use href="#i-pin" /></svg><svg><use href="#i-min" /></svg><svg><use href="#i-max" /></svg><svg><use href="#i-quit" /></svg></span>
            </header>
            <div class="deal">
              <dl class="cell stats">
                <div><dt>Gain latent :</dt><dd>-</dd></div>
                <div><dt>Gain Jour :</dt><dd>-</dd></div>
                <div><dt>Trades jour :</dt><dd><b class="pos">0</b> / 0 / <b class="neg">0</b></dd></div>
                <div class="loose"><dt>Ordres :</dt><dd>0 <svg class="s9"><use href="#i-x" /></svg> / 0<svg class="s12"><use href="#i-gears" /></svg></dd></div>
                <div class="loose"><dt>Position :</dt><dd>0 <svg class="s9"><use href="#i-x2" /></svg> / 0<svg class="s12"><use href="#i-gears" /></svg></dd></div>
                <div class="loose"><dt>Durée pos. :</dt><dd>-</dd></div>
              </dl>
              <div class="cell form">
                <label class="bigqty">Qté<input type="text" value="0.5"></label>
                <div class="row">
                  <label class="off"><input type="checkbox" checked>Stop (G)</label><input class="box" type="text" value="647" aria-label="Stop points">pts
                  <label class="lim"><input type="checkbox">Limite</label><input class="box thin" type="text" value="5" aria-label="Limite points">pts
                </div>
                <hr>
                <div class="row steps">
                  <span><input type="text" value="1" aria-label="Pas du stop"><svg viewBox="0 0 6 12"><path d="M1 5l2-3 2 3zM1 7l2 3 2-3z" /></svg></span>
                  <span><input type="text" value="1" aria-label="Pas de la limite"><svg viewBox="0 0 6 12"><path d="M1 5l2-3 2 3zM1 7l2 3 2-3z" /></svg></span>
                </div>
              </div>
              <div class="cell"></div>
              <button class="quote sellq"><span>Vendre 0,5</span><strong>12 932,0</strong><em>+ Stop (G) 647</em></button>
              <div class="cell centre">
                <div class="row ghost"><button>Stop à 1 ticks</button><button>Limite à 1 ticks</button></div>
                <p>Pas de position</p>
              </div>
              <button class="quote buyq"><span>Acheter 0,5</span><strong>12 937,0</strong><em>+ Stop (G) 647</em></button>
            </div>
            <div class="actions">
              <button class="ic" aria-label="Ordres"><svg><use href="#i-orders" /></svg></button>
              <button class="wide">Inverser position</button>
              <button class="wide">Pas d'ordres en attente</button>
              <button class="ic" aria-label="Valider"><svg><use href="#i-check" /></svg></button>
              <button class="ic" aria-label="Lier"><svg><use href="#i-link" /></svg></button>
              <button class="ic" aria-label="Outils"><svg><use href="#i-tool" /></svg></button>
            </div>
            <table>
              <thead><tr><th class="n"><svg viewBox="0 0 12 10"><path d="M1 1h9v8H1z" fill="none" stroke="#fff" stroke-width="1.500" /><path d="M4 3h3v3H4z" fill="#fff" /></svg><svg viewBox="0 0 12 12"><path d="M2 11L7 6C6 3 8 1 10 1L9 3l1 1.500L12 4c0 3-2 4-4 3.500L3.500 12z" fill="#fff" /></svg></th><th class="q">Qté</th><th class="p">Prix de revient unitaire</th><th><svg viewBox="0 0 10 10"><path d="M5 0l4 4H7v5H3V4H1z" fill="#fff" /></svg></th></tr></thead>
            </table>
            <footer class="book"><span>Offre <i>➡</i><b>0</b></span><span>Spread: 5,0</span><span><b>0</b><i>⬅</i> Demande</span></footer>
          </section>

          <section class="perf">
            <header class="title">
              <svg class="logo"><use href="#i-candle" /></svg><span class="name">Performance</span>
              <svg class="caret"><use href="#i-caret" /></svg><b>Tous les instruments</b>
              <span class="when">Aujc</span>
              <span class="winbtns dim"><svg><use href="#i-min" /></svg><svg><use href="#i-max" /></svg><svg><use href="#i-quit" /></svg></span>
            </header>
            <div class="pchart">
              <div class="pplot">
                <div class="gain">Horizontal: <b>Transactions</b>, Vertical: <b>Devise (€)</b>,</div>
                <i v-for="p in perfAxis" :key="p.v" :class="{ zero: p.v === 0 }" :style="{ top: p.at + '%' }"></i>
                <div class="loss">© IT-Finance.com</div>
              </div>
              <div class="paxis">
                <span v-for="p in perfAxis" :key="p.v" :class="{ bold: p.v === 0, hi: p.v === 10, lo: p.v === -10 }" :style="{ top: p.at + '%' }">{{ p.v }}</span>
              </div>
            </div>
          </section>
        </div>
      </div>
    </main>
  </div>
</template>

<style>
body { background: #3c4c56; }
</style>

<style scoped>
* { box-sizing: border-box; }
.defs { position: absolute; width: 0; height: 0; }
.app { min-height: 100vh; display: flex; flex-direction: column; background: #a3c3d0; border-bottom: 1px solid #3c4c56; color: #15181a; font: 8px/10px "Liberation Sans", Arial, sans-serif; }
button, input, select { font: inherit; color: inherit; margin: 0; padding: 0; border: 0; background: none; border-radius: 0; min-width: 0; }
svg { display: inline-block; flex: none; vertical-align: middle; }
.neg { color: #d4101c; }
.pos { color: #12a01c; }
.bold { font-weight: bold; }
.logo { width: 12px; height: 11px; }
.s9 { width: 9px; height: 9px; }
.s11 { width: 11px; height: 11px; }
.s12 { width: 12px; height: 10px; }

.menubar { height: 16px; display: flex; align-items: center; padding: 0 2px; background: linear-gradient(#b2d0dc, #a2c4d2); border-bottom: 1px solid #8eb0be; }
.menubar nav { display: flex; gap: 7px; margin-left: 5px; }
.menubar a { color: inherit; text-decoration: none; }
.push { margin-left: auto; margin-right: 6px; }
.brand { background: #22282c; color: #fff; font-weight: bold; padding: 2px 4px; }
.brand i { font-style: normal; font-weight: normal; color: #a4dc28; }
.winbtns { margin-left: auto; display: flex; align-items: center; gap: 2px; color: #fff; background: #6496ec; height: 16px; padding: 0 2px; }
.winbtns svg { width: 9px; height: 9px; }
.winbtns .kbd { width: 17px; height: 12px; margin-right: 2px; }
.winbtns.dim { background: none; color: #7494a4; margin-left: 0; }

.toolbar { height: 22px; display: flex; align-items: center; padding: 0 2px 0 4px; background: linear-gradient(#a6c6d3, #9bbcca); }
.search { display: flex; align-items: center; width: 100px; height: 15px; background: #fff; border: 1px solid #a8bcc6; padding: 0 1px; }
.search input { flex: 1; font-style: italic; }
.search input::placeholder { color: #b0b0b0; }
.search svg { width: 12px; height: 12px; }
.tool { width: 19px; height: 18px; }
.tool svg { width: 14px; height: 14px; }
.tool.on { background: #8aa4ae; }
.sep { width: 1px; height: 14px; background: #86a4b0; margin: 0 3px; }
.palette { display: grid; grid-template-columns: repeat(14, 8px); grid-auto-rows: 8px; margin-left: 1px; margin-right: auto; }
.palette button { box-shadow: inset 0 0 1px #6668; }
.thru { height: 16px; padding: 0 4px; background: #8ce48c; white-space: nowrap; }
.thru.first { background: #48cc50; }
.thru svg { width: 12px; height: 12px; }
.thru:last-child svg { width: 8px; height: 14px; margin-left: 2px; }

.desk { flex: 1; display: grid; grid-template-columns: 641fr 639fr 640fr; }
.column { min-width: 0; display: flex; flex-direction: column; --axis: 36px; --l: 2px; --r: 1px; }
.column.b { --axis: 37px; --l: 3px; --r: 2px; }
.column.c { --axis: 46px; --l: 2px; --r: 2px; }
.win { flex: 1; display: flex; flex-direction: column; border-top: 1px solid #86a8b8; }
.title { height: 16px; display: flex; align-items: center; padding-left: 2px; gap: 4px; background: linear-gradient(#b0d0dd, #a4c5d2); white-space: nowrap; overflow: hidden; }
.title .logo { margin-right: -3px; }
.title .caret { width: 6px; height: 4px; margin-right: -2px; }
.title .info { width: 9px; height: 9px; margin: 0 4px 0 3px; }
.title .neg { margin-right: 2px; }
.infos { height: 14px; display: flex; justify-content: space-evenly; align-items: center; background: #98b8c6; white-space: pre; }
.settings { height: 33px; display: flex; }
.choices { flex: 1; display: flex; justify-content: space-between; align-items: center; padding: 2px 49px 0; background: linear-gradient(#c4d8e1, #eef4f7); }
.b .choices { padding: 2px 36px 0; }
.sel { display: flex; align-items: center; width: 62px; height: 14px; background: #fff; border: 1px solid #b4c8d2; }
.sel select { appearance: none; flex: 1; padding-left: 2px; height: 12px; outline: none; }
.sel svg { width: 11px; height: 12px; padding: 3px 2px; background: #a8c8d6; }
.pair { display: flex; align-items: center; }
.num { width: 44px; height: 14px; background: #fff; text-align: right; padding-right: 2px; }
.spin { width: 8px; height: 14px; background: #c4dce8; }
.indic { display: flex; align-items: center; background: #fff; border: 1px solid #c0ccd2; }
.indic svg { width: 24px; height: 18px; }
.indic .caret { width: 8px; height: 6px; }
.trade { display: flex; width: 261px; background: #fff; border: 1px solid #b8ccd6; border-width: 1px 0 1px 2px; border-radius: 6px 0 0 6px; padding: 0 1px 0 4px; white-space: nowrap; }
.cfg { width: 13px; height: 15px; margin-top: 8px; background: #eee; border: 1px solid #ccd; }
.cfg svg { width: 10px; height: 12px; }
.col { display: flex; flex-direction: column; align-items: center; margin-left: 3px; line-height: 9px; }
.col svg { width: 17px; height: 18px; }
.col button { width: 20px; height: 21px; background: #f2f4f6; border: 1px solid #ccd2d6; }
.col.qty { margin-left: 2px; }
.qty input { width: 35px; height: 14px; border: 1px solid #c8d2d8; text-align: right; padding-right: 1px; }
.col button.px { width: 47px; height: 21px; border: 0; color: #fff; display: flex; align-items: flex-end; justify-content: center; border-radius: 1px; padding-bottom: 1px; }
.col + .col:nth-child(6) { margin-left: 2px; }
.col button.sell { background: #e04850; }
.col button.buy { background: #20b028; }
.px big { font-size: 16px; line-height: 16px; }
.px sup { font-size: 8px; line-height: 8px; align-self: flex-start; margin-top: 3px; }
.opts { display: flex; flex-direction: column; gap: 5px; border-left: 1px solid #bcc8ce; margin-left: 2px; padding: 2px 0 0 1px; }
.opts div { display: flex; align-items: center; height: 11px; gap: 2px; }
.opts label, .row label { display: flex; align-items: center; gap: 3px; }
.opts label { width: 21px; }
.off { color: #a8b0b4; }
input[type="checkbox"] { appearance: none; width: 9px; height: 9px; background: #fff; border: 1px solid #a4b0b6; display: grid; }
input[type="checkbox"]:checked { background: #e4e8ea; }
input[type="checkbox"]:checked::after { content: "✓"; font: 8px/7px "DejaVu Sans", sans-serif; color: #888; }
.box { width: 16px; height: 12px; border: 1px solid #98a8b0; border-radius: 2px; background: #fff; text-align: center; }
.box.thin { width: 8px; color: #8a9499; background: #e4ecf0; }

.chart { flex: 1 1 0; display: flex; position: relative; padding: 0 var(--r) 0 var(--l); min-height: 120px; }
.column.c .chart { flex-grow: 471; }
.column.c .chart.rsi { flex-grow: 178; border-top: 2px solid #a3c3d0; }
.plot { flex: 1; position: relative; overflow: hidden; }
.plot > svg { position: absolute; inset: 0; width: 100%; height: 100%; }
.renko { background: linear-gradient(#343434, #1a1a1a 50%, #000); }
.price { background: linear-gradient(#cdcdcd, #a2a2a2); }
.rsi .plot { background: linear-gradient(#a8a8a8, #989898); }
.ln { fill: none; vector-effect: non-scaling-stroke; }
.mid { stroke-width: 2px; }
.thick { stroke-width: 3px; }
.ma { stroke-width: 3px; stroke-linejoin: round; }
.dots { stroke-width: 2px; stroke-dasharray: 3 2; }
.grain { stroke-width: 1px; stroke-dasharray: 2 2; }
.knots { fill: #8c9a8c; stroke: #333; stroke-width: 1px; }
.body { vector-effect: non-scaling-stroke; stroke-width: 1px; }
.hair { position: absolute; left: 0; right: 0; height: 1px; background: #ffffff0a; }
.hair.strong { background: #ffffff1c; }
.plot small { position: absolute; left: 1px; bottom: 1px; font: italic bold 5px/6px "Liberation Sans", Arial, sans-serif; color: #e01818; }
.renko small { color: #a80c0c; }
.level { position: absolute; right: 0; transform: translateY(-100%); line-height: 9px; }
.red { color: #f01820; }
.yellow { color: #f4f420; }
.black { color: #000; }
.green { color: #0c6410; }
.blue { color: #1818d0; }
.lime { color: #20f020; }
.yaxis { width: var(--axis); background: #fff; position: relative; overflow: hidden; }
.lab { position: absolute; left: 0; padding: 0 3px; transform: translateY(-50%); white-space: nowrap; }
.lab::before { content: ""; position: absolute; left: 0; top: 5px; width: 2px; height: 1px; background: #778; }
.tag { left: 2px; padding: 0 1px; background: #8e8e8e; line-height: 10px; }
.tag::before { display: none; }
.tag.md { font: bold 9px/11px "Liberation Sans", Arial, sans-serif; }
.tag.lg { font: bold 10px/13px "Liberation Sans", Arial, sans-serif; }
.tag.xl { font: bold 11px/13px "Liberation Sans", Arial, sans-serif; }
.tag.dark { background: #26262a; color: #d81c1c; }
.tag.gold { background: #f4cc14; }
.head { position: absolute; left: var(--l); top: 0; height: 12px; display: flex; align-items: center; gap: 1px; padding: 0 2px 0 1px; background: #aecddb; white-space: nowrap; }
.head svg { width: 10px; height: 10px; }
.head .s11 { width: 12px; height: 12px; }
.head .pale { background: #dceaf0; margin-left: 1px; }
.head .day { position: absolute; left: 100%; margin-left: 2px; color: #f01820; }
.xaxis { height: 13px; background: #fff; margin: 0 var(--r) 0 var(--l); padding-right: var(--axis); border-top: 1px solid #c8d8de; }
.xaxis div { position: relative; height: 12px; }
.xaxis span { position: absolute; top: 2px; transform: translateX(-50%); }
.foot { height: 22px; display: flex; align-items: center; padding: 0 2px; background: linear-gradient(#9ebecb, #a6c6d3); }
.c .foot { height: 23px; }
.foot button { width: 20px; height: 18px; }
.foot button svg { width: 13px; height: 13px; }
.foot button .tall { height: 16px; }
.foot .share { width: 49px; height: 15px; background: #1e90dc; color: #fff; border-radius: 1px; white-space: nowrap; margin-right: 3px; }
.foot .share svg { width: 11px; height: 11px; margin-right: 3px; }
.foot .arrow { width: 11px; height: 12px; background: #b0d0dd; font: 6px/10px "DejaVu Sans", sans-serif; }
.track { flex: 1; height: 12px; background: #9abcca; position: relative; border: 1px solid #88aaba; border-width: 1px 0; }
.track i { position: absolute; top: 0; bottom: 0; background: #b0d0dd; border: 1px solid #94b6c6; }

.bottom { display: grid; grid-template-columns: 422fr 218fr; height: 292px; border-top: 1px solid #86a8b8; }
.ticket { display: flex; flex-direction: column; padding: 0 2px; min-width: 0; }
.ticket .winbtns { margin-right: -1px; }
.deal { display: grid; grid-template-columns: 127fr 164fr 128fr; grid-template-rows: 102px 89px; gap: 1px; background: #98b4c0; }
.cell { background: #ccdce4; min-width: 0; }
.stats { margin: 0; padding: 12px 0 0 5px; display: flex; flex-direction: column; gap: 2px; }
.stats div { display: flex; gap: 4px; height: 10px; white-space: nowrap; }
.stats .loose { margin-top: 3px; }
.stats dt { width: 44px; }
.stats dd { margin: 0; font-weight: bold; }
.form { display: flex; flex-direction: column; align-items: center; padding: 10px 5px 0; }
.bigqty { display: flex; flex-direction: column; align-items: center; }
.bigqty input { width: 56px; height: 23px; background: #fff; border: 1px solid #b0bcc2; font-size: 18px; text-align: right; color: #000; }
.row { display: flex; align-items: center; gap: 2px; white-space: nowrap; }
.form .row { margin-top: 7px; }
.form .lim { margin-left: 8px; }
.form hr { width: 100%; border: 0; border-top: 1px solid #a0b8c4; margin: 13px 0 -2px; }
.form .steps { gap: 52px; }
.steps span { display: flex; border: 1px solid #a8b8c0; background: #fff; }
.steps input { width: 20px; height: 12px; text-align: right; }
.steps svg { width: 8px; height: 12px; background: #b4d0de; }
.quote { display: flex; flex-direction: column; align-items: center; color: #000; white-space: nowrap; }
.quote span { font-size: 16px; line-height: 18px; margin-top: 4px; color: #ffffff90; }
.quote strong { font-weight: normal; font-size: 30px; line-height: 34px; margin-top: 10px; }
.quote em { font-style: normal; margin-top: 11px; }
.sellq { background: #ecbcbc; }
.buyq { background: #a8d0a8; }
.centre { display: flex; flex-direction: column; color: #94a4ac; }
.ghost { height: 19px; border-bottom: 1px solid #a0b8c4; gap: 0; }
.ghost button { flex: 1; height: 18px; }
.ghost button + button { border-left: 1px solid #a0b8c4; }
.centre p { margin: auto; }
.actions { display: flex; height: 20px; background: #ccdce4; color: #94a4ac; border-top: 1px solid #a0b8c4; }
.actions .wide { flex: 1; border-right: 1px solid #a0b8c4; border-left: 1px solid #dce8ee; }
.actions .ic { width: 19px; }
.actions svg { width: 14px; height: 15px; color: #000; fill: #000; }
table { width: 100%; border-collapse: collapse; table-layout: fixed; background: #41699a; color: #fff; }
th { font-weight: normal; height: 12px; padding: 0; line-height: 10px; }
th.n { width: 6%; text-align: left; white-space: nowrap; }
th.q { width: 29%; }
th.p { width: 35%; }
th svg { width: 11px; height: 9px; margin-left: 1px; }
.book { margin-top: auto; height: 12px; display: flex; justify-content: space-between; align-items: center; background: #b4d2de; }
.book i { color: #3888d0; font: 8px/8px "DejaVu Sans", sans-serif; }
.perf { display: flex; flex-direction: column; min-width: 0; padding: 0 2px 0 1px; }
.perf .title { padding-left: 0; }
.perf .name { margin: 0 2px; }
.when { background: #fff; padding: 1px 1px; margin-left: auto; }
.perf .winbtns { margin-left: -2px; gap: 1px; padding: 0; }
.pchart { flex: 1; display: flex; background: #fff; }
.pplot { flex: 1; margin-bottom: 14px; position: relative; display: flex; flex-direction: column; justify-content: space-between; background: linear-gradient(#c8e8f8, #a4c8d8 60%, #88a8b8); }
.gain { height: 22px; background: #a8e4c8; padding-left: 1px; white-space: nowrap; overflow: hidden; }
.loss { height: 21px; background: #ac9ca6; color: #e01820; padding-top: 11px; }
.pplot i { position: absolute; left: 0; right: 0; height: 1px; background: #ffffff30; }
.pplot i.zero { background: #4868d8; }
.paxis { width: 37px; position: relative; margin-bottom: 14px; }
.paxis span { position: absolute; left: 3px; transform: translateY(-50%); }
.paxis .hi { color: #40b850; border: 1px solid #8a9; padding: 0 1px; }
.paxis .lo { color: #d85050; border: 1px solid #a99; padding: 0 1px; }
</style>
